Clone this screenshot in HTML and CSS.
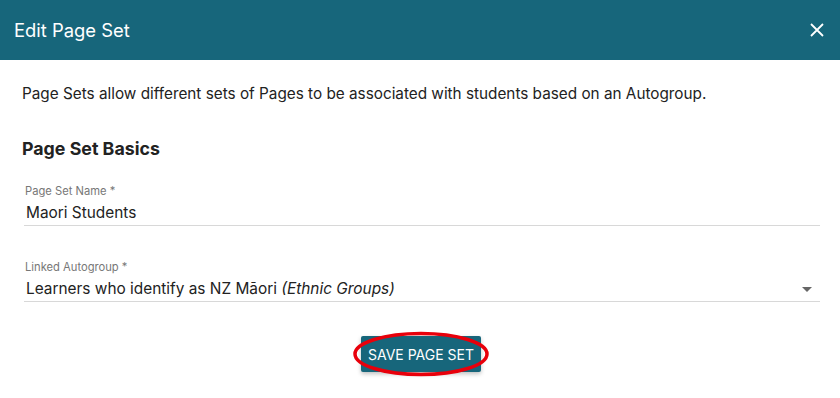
FILE: index.html
```html
<!DOCTYPE html>
<html lang="en">
<head>
  <meta charset="UTF-8">
  <title>Edit Page Set</title>
  <link rel="stylesheet" href="styles.css">
</head>
<body>
  <div class="dialog">
    <div class="dialog-header">
      <h1>Edit Page Set</h1>
      <button class="close" type="button" aria-label="Close">
        <svg width="14" height="14" viewBox="0 0 14 14"><path d="M1 1L13 13M13 1L1 13" stroke="#fff" stroke-width="1.8" fill="none"/></svg>
      </button>
    </div>

    <div class="dialog-body">
      <p class="intro">Page Sets allow different sets of Pages to be associated with students based on an Autogroup.</p>

      <h2>Page Set Basics</h2>

      <div class="field">
        <label>Page Set Name *</label>
        <div class="value">Maori Students</div>
      </div>

      <div class="field">
        <label>Linked Autogroup *</label>
        <div class="value select">
          <span>Learners who identify as NZ Māori <em>(Ethnic Groups)</em></span>
          <span class="caret"></span>
        </div>
      </div>

      <div class="actions">
        <div class="save-wrap">
          <button class="save" type="button">SAVE PAGE SET</button>
          <svg class="ring" width="140" height="48" viewBox="0 0 140 48"><ellipse cx="70" cy="24" rx="66" ry="20.5" fill="none" stroke="#e8000b" stroke-width="3.5"/></svg>
        </div>
      </div>
    </div>
  </div>
</body>
</html>
```

FILE: styles.css
```css
body {
  margin: 0;
  font-family: Inter, "Noto Sans", sans-serif;
  color: #222;
  background: #fff;
}

.dialog {
  width: 840px;
  height: 398px;
  overflow: hidden;
}

.dialog-header {
  height: 60px;
  background: #17667b;
  display: flex;
  align-items: center;
  justify-content: space-between;
  padding: 0 12px 0 14px;
}

.dialog-header h1 {
  margin: 0;
  font-size: 18.4px;
  font-weight: 400;
  color: #fff;
}

.close {
  background: none;
  border: none;
  padding: 4px;
  display: flex;
  cursor: pointer;
}

.dialog-body {
  padding: 22px 20px 0 22px;
}

.intro {
  margin: 0 0 31px;
  font-size: 15.3px;
  line-height: 24px;
}

h2 {
  margin: 0 0 23px;
  font-size: 17.8px;
  font-weight: 700;
  line-height: 24px;
}

.field {
  margin: 0 0 34px 2px;
}

.field label {
  display: block;
  font-size: 11.2px;
  color: #777;
  line-height: 14px;
  padding-left: 1px;
}

.value {
  font-size: 15.4px;
  line-height: 24px;
  padding: 3px 2px 0 2px;
  border-bottom: 1px solid #d8d8d8;
}

.select {
  display: flex;
  align-items: center;
  justify-content: space-between;
}

.caret {
  width: 0;
  height: 0;
  border-left: 5px solid transparent;
  border-right: 5px solid transparent;
  border-top: 5px solid #666;
  margin-right: 6px;
}

.actions {
  display: flex;
  justify-content: center;
  margin-top: -4px;
}

.save-wrap {
  position: relative;
  padding: 4px 0;
}

.save {
  background: #17667b;
  color: #fff;
  border: none;
  border-radius: 2px;
  font-family: Inter, "Noto Sans", sans-serif;
  font-size: 14px;
  white-space: nowrap;
  height: 36px;
  width: 120px;
  padding: 0;
  box-shadow: 0 2px 4px rgba(0,0,0,0.25);
}

.ring {
  position: absolute;
  left: -10px;
  top: -2px;
}
```
